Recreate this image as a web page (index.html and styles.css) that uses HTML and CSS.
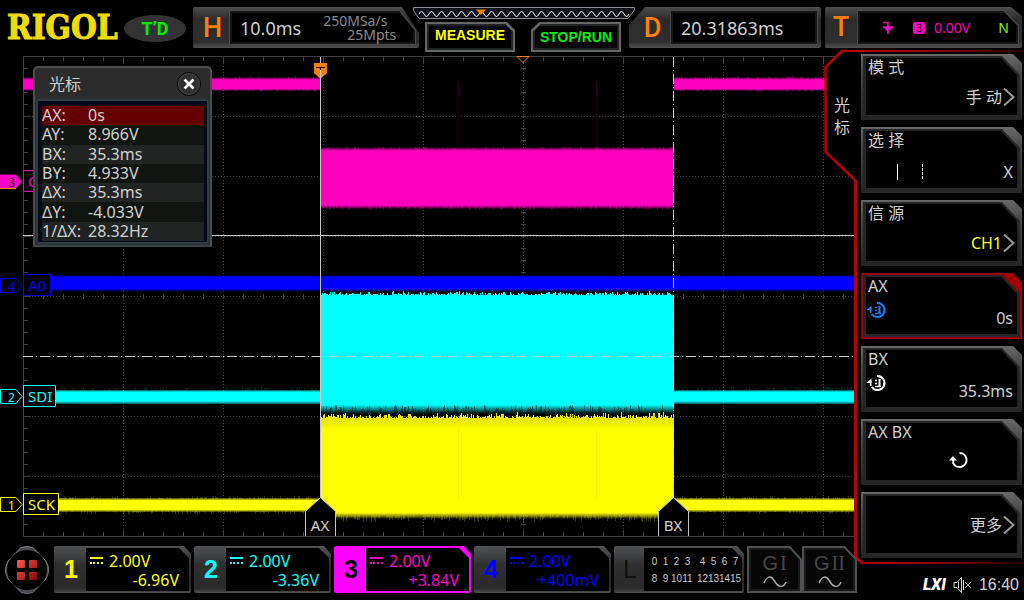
FILE: index.html
```html
<!DOCTYPE html>
<html lang="zh-CN">
<head>
<meta charset="utf-8">
<title>RIGOL</title>
<link rel="stylesheet" href="styles.css">
</head>
<body>
<div class="screen">
  <header class="topbar">
    <div class="logo">RIGOL</div>
    <div class="trig-state">T’D</div>
    <section class="box box-h">
      <span class="box-letter">H</span>
      <div class="box-well well-h"><div class="well-in">
        <span class="big">10.0ms</span>
        <span class="rate"><span>250MSa/s</span><span class="indent">25Mpts</span></span>
      </div></div>
    </section>
    <div class="center">
      <svg class="membar" viewBox="0 0 222 13">
        <path d="M.5.500H221.500V3L215 11.500H6L.5 3.500Z" fill="#101018" stroke="#8c8c94"/>
        <path id="memwave" fill="none" stroke="#fff"/>
        <path d="M63 2.500H73L68 8Z" fill="#ff8000"/>
      </svg>
      <div class="keys">
        <button class="key measure"><span>MEASURE</span></button>
        <button class="key run"><span>STOP/RUN</span></button>
      </div>
    </div>
    <section class="box box-d">
      <span class="box-letter">D</span>
      <div class="box-well"><div class="well-in"><span class="big">20.31863ms</span></div></div>
    </section>
    <section class="box box-t">
      <span class="box-letter">T</span>
      <div class="box-well well-h"><div class="well-in trig">
        <svg width="12" height="14" viewBox="0 0 12 14"><path d="M1 1.500H6V13M1 6H11" fill="none" stroke="#ff00c8" stroke-width="1.500"/><path d="M1 6H11L6 11Z" fill="#ff00c8"/></svg>
        <span class="src">3</span><span class="level">0.00V</span><span class="mode">N</span>
      </div></div>
    </section>
  </header>

  <main class="scope">
    <svg class="plot" viewBox="0 52 854 490" preserveAspectRatio="xMinYMin meet">
      <defs>
        <linearGradient id="gm" x2="0" y2="1"><stop offset="0" stop-color="#ff00c0" stop-opacity="0"/><stop offset=".2" stop-color="#ff00c0"/><stop offset=".85" stop-color="#ff00c0"/><stop offset="1" stop-color="#ff00c0" stop-opacity="0"/></linearGradient>
        <linearGradient id="gmb" x2="0" y2="1"><stop offset="0" stop-color="#ff00c0" stop-opacity="0"/><stop offset=".06" stop-color="#ff00c0"/><stop offset=".94" stop-color="#ff00c0"/><stop offset="1" stop-color="#ff00c0" stop-opacity="0"/></linearGradient>
        <linearGradient id="gb" x2="0" y2="1"><stop offset="0" stop-color="#00f" stop-opacity="0"/><stop offset=".12" stop-color="#00f"/><stop offset=".8" stop-color="#00f"/><stop offset="1" stop-color="#00f" stop-opacity="0"/></linearGradient>
        <linearGradient id="gc" x2="0" y2="1"><stop offset="0" stop-color="#0ff" stop-opacity=".3"/><stop offset=".15" stop-color="#0ff"/><stop offset=".8" stop-color="#0ff"/><stop offset="1" stop-color="#0ff" stop-opacity=".3"/></linearGradient>
        <linearGradient id="gy" x2="0" y2="1"><stop offset="0" stop-color="#ff0" stop-opacity=".2"/><stop offset=".17" stop-color="#ff0"/><stop offset=".83" stop-color="#ff0"/><stop offset="1" stop-color="#ff0" stop-opacity=".2"/></linearGradient>
        <linearGradient id="gcf" x2="0" y2="1"><stop offset="0" stop-color="#0ff"/><stop offset="1" stop-color="#0ff" stop-opacity="0"/></linearGradient>
        <linearGradient id="gyf" x2="0" y2="1"><stop offset="0" stop-color="#ff0"/><stop offset="1" stop-color="#ff0" stop-opacity="0"/></linearGradient>
        <linearGradient id="gyt" gradientUnits="userSpaceOnUse" x1="0" x2="0" y1="414" y2="430"><stop offset="0" stop-color="#e2e200"/><stop offset=".6" stop-color="#eeee00"/><stop offset="1" stop-color="#ff0"/></linearGradient>
      </defs>
      <g fill="none" stroke="#404040">
        <path id="grid" stroke-dasharray="1 2"/>
        <path id="ticks"/>
        <path d="M23.500 536.500V56.500H854M23.500 536.500H854"/>
      </g>
      <path d="M458.500 78V149M596.500 78V149" stroke="#18000f"/>
      <path d="M458.500 84V96M596.500 84V96" stroke="#38002a"/>
      <g>
        <rect x="23" y="77" width="297" height="14" fill="url(#gm)"/>
        <rect x="674" y="77" width="180" height="14" fill="url(#gm)"/>
        <rect x="320" y="147" width="354" height="62" fill="url(#gmb)"/>
        <path id="noise-m" stroke="#ff00c0" stroke-opacity=".3"/>
        <rect x="50" y="275" width="804" height="17" fill="url(#gb)"/>
        <rect x="55" y="390" width="265" height="14" fill="url(#gc)"/>
        <rect x="674" y="390" width="180" height="14" fill="url(#gc)"/>
        <path id="noise-c" stroke="#0ff" stroke-opacity=".12"/>
        <path id="burst-c" fill="#0ff"/>
        <rect x="320" y="405" width="354" height="9" fill="url(#gcf)"/>
        <path id="gap" stroke="#001414" stroke-opacity=".5"/>
        <rect x="59" y="498" width="261" height="14" fill="url(#gy)"/>
        <rect x="674" y="498" width="180" height="14" fill="url(#gy)"/>
        <path id="burst-y" fill="url(#gyt)"/>
        <rect x="320" y="513" width="354" height="6" fill="url(#gyf)"/>
        <path id="noise-y" stroke="#ff0" stroke-opacity=".2"/>
        <path d="M458.500 420V500M596.500 420V500" stroke="#f4f400"/>
      </g>
      <g stroke="#c8c8c8" fill="none">
        <path d="M23 235.500H854M320.500 57V498"/>
        <path d="M23 356.500H854M673.500 57V498" stroke-dasharray="10 3 1 3"/>
      </g>
      <g fill="#000" stroke="#c8c8c8">
        <path d="M305.500 536V511.500L320.500 497.500L335.500 511.500V536"/>
        <path d="M658.500 536V511.500L673.500 497.500L688.500 511.500V536"/>
      </g>
      <g class="cursor-name"><text x="320" y="531">AX</text><text x="673" y="531">BX</text></g>
      <path d="M517 56.500H529L523 62.500Z" fill="#000" stroke="#ff8000"/>
      <path d="M314 63H327V73L320.500 79L314 73Z" fill="#ff8000"/>
      <path d="M316 67.500H325M320.500 67V75" stroke="#000" fill="none"/>
      <path d="M320.500 70V79" stroke="#c8c8c8"/>
      <g class="tag" fill="#000">
        <path d="M0 174.500H16L22 181.500L16 188.500H0Z" fill="#ff00c8"/>
        <path d="M0 188.500H16" stroke="#ff8000"/>
        <path d="M23.500 170.500H55.500V191.500H23.500Z" stroke="#ff00c8"/>
        <path d="M.5 278.500H16L22 285.500L16 292.500H.5ZM23.500 274.500H50.500V295.500H23.500Z" stroke="#00f"/>
        <path d="M.5 389.500H16L22 396.500L16 403.500H.5ZM23.500 385.500H55.500V406.500H23.500Z" stroke="#0ff"/>
        <path d="M.5 497.500H16L22 504.500L16 511.500H.5ZM23.500 493.500H58.500V514.500H23.500Z" stroke="#ff0"/>
      </g>
      <g class="tag-num"><text x="8" y="187" fill="#000">3</text><text x="8" y="291" fill="#00f">4</text><text x="8" y="402" fill="#0ff">2</text><text x="8" y="510" fill="#ff0">1</text></g>
      <g class="tag-name"><text x="28" y="187" fill="#ff00c8">C</text><text x="28" y="291" fill="#00f">A0</text><text x="28" y="402" fill="#0ff">SDI</text><text x="28" y="510" fill="#ff0">SCK</text></g>
    </svg>

    <section class="dialog">
      <div class="dialog-head"><h2>光标</h2>
        <button class="close" aria-label="关闭"><svg width="12" height="12" viewBox="0 0 12 12"><path d="M1.500 1.500L10.500 10.500M10.500 1.500L1.500 10.500" stroke="#fff" stroke-width="2.600"/></svg></button>
      </div>
      <div class="dialog-body">
        <table class="readout">
          <tr class="active"><th>AX:</th><td>0s</td></tr>
          <tr><th>AY:</th><td>8.966V</td></tr>
          <tr><th>BX:</th><td>35.3ms</td></tr>
          <tr><th>BY:</th><td>4.933V</td></tr>
          <tr><th>ΔX:</th><td>35.3ms</td></tr>
          <tr><th>ΔY:</th><td>-4.033V</td></tr>
          <tr><th>1/ΔX:</th><td>28.32Hz</td></tr>
        </table>
      </div>
    </section>
  </main>

  <aside class="side">
    <nav class="menu">
      <svg class="outline" viewBox="824 50 200 516">
        <defs>
          <linearGradient id="fade" gradientUnits="userSpaceOnUse" x1="850" x2="1022" y1="0" y2="0"><stop offset="0" stop-color="#b80000"/><stop offset=".4" stop-color="#a00000"/><stop offset="1" stop-color="#200"/></linearGradient>
        </defs>
        <path d="M841 51L825 67V152L856 181V557L862 563H870V51Z" fill="#000"/>
        <path d="M841 51H1022M861 563H1022" stroke="url(#fade)" stroke-width="2"/>
        <path d="M842 51L825.500 67V152L855 180" fill="none" stroke="#b80000" stroke-width="2.500"/>
        <path d="M855.500 180V557L862 563" fill="none" stroke="#b80000" stroke-width="3"/>
      </svg>
      <div class="tab">光标</div>
      <button class="item"><span class="name">模 式</span><span class="value pick">手 动<svg class="chev" width="12" height="20" viewBox="0 0 12 20"><path d="M1 1.500L10.500 10L1 18.500" fill="none" stroke="#999" stroke-width="2"/></svg></span></button>
      <button class="item"><span class="name">选 择</span><span class="value split"><svg width="28" height="18" viewBox="0 0 28 18"><path d="M1.500 1V17" stroke="#fff"/><path d="M26.500 1V17" stroke="#fff" stroke-dasharray="3 1"/></svg><span>X</span></span></button>
      <button class="item"><span class="name">信 源</span><span class="value pick ch1">CH1<svg class="chev" width="12" height="20" viewBox="0 0 12 20"><path d="M1 1.500L10.500 10L1 18.500" fill="none" stroke="#999" stroke-width="2"/></svg></span></button>
      <button class="item selected"><span class="name">AX</span><svg class="knob blue" width="20" height="18" viewBox="0 0 20 18"><g fill="none" stroke="currentColor"><path d="M10 2A7 7 0 1 1 4.800 13" stroke-width="2"/><path d="M4 12A7 7 0 0 1 4 7" stroke-width="1.500"/><path d="M8 6.500H10M8 9.500H10M8 12.500H14" stroke-width="1.500"/><path d="M12.500 5V12" stroke-width="2"/></g><path d="M-.5 9L4.500 4.500V9Z" fill="currentColor"/></svg><span class="value">0s</span></button>
      <button class="item"><span class="name">BX</span><svg class="knob" width="20" height="18" viewBox="0 0 20 18"><g fill="none" stroke="currentColor"><path d="M10 2A7 7 0 1 1 4.800 13" stroke-width="2"/><path d="M4 12A7 7 0 0 1 4 7" stroke-width="1.500"/><path d="M8 6.500H10M8 9.500H10M8 12.500H14" stroke-width="1.500"/><path d="M12.500 5V12" stroke-width="2"/></g><path d="M-.5 9L4.500 4.500V9Z" fill="currentColor"/></svg><span class="value">35.3ms</span></button>
      <button class="item"><span class="name">AX BX</span><span class="value turn"><svg width="20" height="18" viewBox="0 0 20 18"><path d="M10.500 2A7 7 0 1 1 4.200 12V7" fill="none" stroke="#fff" stroke-width="2"/><path d="M0 9.500L4 5L8 9.500Z" fill="#fff"/></svg></span></button>
      <button class="item more"><span class="value">更多<svg class="chev" width="12" height="20" viewBox="0 0 12 20"><path d="M1 1.500L10.500 10L1 18.500" fill="none" stroke="#999" stroke-width="2"/></svg></span></button>
    </nav>
    <div class="status">
      <span class="lxi">LXI</span>
      <svg width="19" height="18" viewBox="0 0 19 18"><path d="M1 6.500H4L8.500 1.500V16.500L4 11.500H1Z" fill="none" stroke="#ddd"/><path d="M5.500 6V12M10.500 4V14" stroke="#ddd"/><path d="M12 6L18 12M18 6L12 12" stroke="#aaa"/></svg>
      <time>16:40</time>
    </div>
  </aside>

  <footer class="bottom">
    <button class="home" aria-label="菜单"><svg viewBox="0 0 46 48">
      <defs><linearGradient id="rim" x2="0" y2="1"><stop offset="0" stop-color="#888"/><stop offset=".5" stop-color="#777"/><stop offset="1" stop-color="#667"/></linearGradient><linearGradient id="red" gradientUnits="userSpaceOnUse" x1="13" y1="14" x2="33" y2="34"><stop offset="0" stop-color="#ff5858"/><stop offset="1" stop-color="#900000"/></linearGradient></defs>
      <path d="M17 1.500Q23-.5 29 1.500L42 15Q47 24 42 33L29 46.500Q23 48.500 17 46.500L4 33Q-1 24 4 15Z" fill="#4a4a4e" stroke="url(#rim)"/>
      <circle cx="23" cy="24" r="20" fill="#000"/>
      <g fill="url(#red)"><rect x="13" y="14" width="8" height="8" rx="1"/><rect x="25" y="14" width="8" height="8" rx="1"/><rect x="13" y="26" width="8" height="8" rx="1"/><rect x="25" y="26" width="8" height="8" rx="1"/></g>
    </svg></button>
    <button class="chan c1"><span class="num">1</span><span class="well"><span class="scale"><i class="dc"></i>2.00V</span><span class="off">-6.96V</span></span></button>
    <button class="chan c2"><span class="num">2</span><span class="well"><span class="scale"><i class="dc"></i>2.00V</span><span class="off">-3.36V</span></span></button>
    <button class="chan c3"><span class="num">3</span><span class="well"><span class="scale"><i class="dc"></i>2.00V</span><span class="off">+3.84V</span></span></button>
    <button class="chan c4"><span class="num">4</span><span class="well"><span class="scale"><i class="dc"></i>2.00V</span><span class="off">+400mV</span></span></button>
    <button class="chan logic"><span class="num">L</span><span class="well digits">
      <span>0</span><span>1</span><span>2</span><span>3</span><i></i><span>4</span><span>5</span><span>6</span><span>7</span>
      <span>8</span><span>9</span><span>10</span><span>11</span><i></i><span>12</span><span>13</span><span>14</span><span>15</span>
    </span></button>
    <button class="gen"><span class="gen-name">G<b>I</b></span><svg width="24" height="14" viewBox="0 0 24 14"><path d="M1 8C4 1 8 0 11.500 6S20 14 23 7" fill="none" stroke="#aaa" stroke-width="1.500"/></svg></button>
    <button class="gen"><span class="gen-name">G<b>II</b></span><svg width="24" height="14" viewBox="0 0 24 14"><path d="M1 8C4 1 8 0 11.500 6S20 14 23 7" fill="none" stroke="#aaa" stroke-width="1.500"/></svg></button>
  </footer>
</div>
<script src="traces.js"></script>
</body>
</html>
```
FILE: styles.css
```css
* { box-sizing: border-box; }
body {
  margin: 0;
  background: #000;
  color: #d0d0d0;
  font: 16px/20px "Noto Sans", "Noto Sans CJK SC", sans-serif;
}
button { font: inherit; color: inherit; border: 0; margin: 0; padding: 0; background: none; text-align: left; }
svg { display: block; }

.screen {
  display: grid;
  grid-template-columns: minmax(0, 1fr) 170px;
  grid-template-rows: 52px minmax(0, 1fr) 58px;
  min-height: 100vh;
}

/* top bar */
.topbar { grid-column: 1 / 3; display: flex; align-items: flex-start; padding: 7px 2px 0 7px; }
.logo {
  flex: 0 0 117px;
  margin-top: 1px;
  font: bold 33px/40px "DejaVu Serif Condensed", "Liberation Serif", serif;
  color: #f0dc00;
  -webkit-text-stroke: 1px #f0dc00;
}
.trig-state {
  flex: 0 0 62px;
  height: 27px;
  margin: 8px 7px 0 0;
  border-radius: 50%;
  background: #333;
  color: #00f000;
  text-align: center;
  font: bold 18px/28px "Roboto", sans-serif;
}
.box {
  display: flex;
  height: 41px;
  padding: 3px;
  border-radius: 2px;
  background: linear-gradient(#4c4c4c, #2c2c2c 30%, #2e2e2e 85%, #505050);
}
.box-h { flex: 227 0 0; clip-path: polygon(0 0, calc(100% - 17px) 0, 100% 26px, 100% 100%, 0 100%); }
.box-d { flex: 192 0 0; margin-left: -6px; clip-path: polygon(16px 0, 100% 0, 100% 100%, 0 100%, 0 18px); }
.box-t { flex: 197 0 0; margin-left: 4px; clip-path: polygon(0 0, calc(100% - 11px) 0, 100% 9px, 100% 100%, 0 100%); }
.box-letter { flex: 0 0 33px; text-align: center; color: #ff8000; font: 500 27px/36px "Roboto", sans-serif; }
.box-t .box-letter { flex-basis: 29px; padding-right: 3px; line-height: 34px; }
.box-d .box-letter { flex-basis: 38px; padding-left: 3px; }
.box-well { flex: 1; padding: 1px; background: #4a4a4a; }
.well-in { height: 100%; display: flex; align-items: center; padding: 0 8px; background: #000; border: 2px solid #161616; }
.well-h, .well-h .well-in { clip-path: polygon(0 0, calc(100% - 16px) 0, 100% 20px, 100% 100%, 0 100%); }
.box-t .well-h, .box-t .well-in { clip-path: polygon(0 0, calc(100% - 15px) 0, 100% 15px, 100% 100%, 0 100%); }
.big { font-size: 18px; line-height: 24px; }
.rate { flex: 1; display: flex; flex-direction: column; padding-left: 22px; color: #8c8c8c; font-size: 14px; line-height: 14px; }
.rate .indent { padding-left: 24px; }
.trig { font-size: 14px; color: #ff00c8; padding: 0 7px 0 22px; }
.src { margin: 0 9px 0 19px; width: 12px; height: 12px; border-radius: 2px; background: #ff00c8; color: #000; font: 11px/12px "Liberation Sans", sans-serif; text-align: center; }
.mode { margin-left: auto; color: #8cf000; }

.center { flex: 0 0 222px; margin-left: -6px; }
.membar { width: 100%; height: 13px; }
.keys { display: flex; justify-content: space-between; padding: 2px 14px 0 12px; }
.key {
  position: relative;
  width: 90px;
  height: 30px;
  background: #666;
  color: #ff0;
  text-align: center;
  font: bold 14px/26px "Liberation Sans", sans-serif;
  isolation: isolate;
}
.key span { display: block; height: 30px; }
.key::before { content: ""; position: absolute; inset: 2px; z-index: -1; background: #000; border: 2px solid #202422; }
.measure, .measure::before { clip-path: polygon(0 0, calc(100% - 8px) 0, 100% 8px, 100% 100%, 0 100%); }
.run, .run::before { clip-path: polygon(8px 0, 100% 0, 100% 100%, 0 100%, 0 8px); }
.run { color: #00f000; line-height: 30px; }

/* waveform area */
.scope { position: relative; min-width: 0; }
.plot { width: 100%; height: 100%; }
.plot text { font-family: "Noto Sans", sans-serif; stroke: none; }
.cursor-name { font-size: 15px; fill: #d0d0d0; text-anchor: middle; }
.tag-num { font-size: 12px; }
.tag-name { font-size: 15px; }

.dialog {
  position: absolute;
  left: 33px;
  top: 14px;
  width: 179px;
  border: 2px solid #4c4e4e;
  border-bottom-color: #384448;
  border-radius: 5px 5px 1px 1px;
  background: #2b2c2b;
}
.dialog-head { display: flex; align-items: center; justify-content: space-between; height: 31px; padding: 0 9px 0 14px; }
.dialog-head h2 { margin: 0; font-size: 16px; font-weight: 400; line-height: 32px; }
.close { width: 24px; height: 24px; border: 1px solid #000; border-radius: 50%; background: #303030; outline: 1px solid #444; outline-offset: -2px; display: flex; align-items: center; justify-content: center; }
.dialog-body { margin: 0 1px 1px; padding: 5px 5px 1px; border: 2px solid #303c42; border-radius: 3px; background: #000a18; }
.readout { width: 162px; height: 135px; margin-left: -1px; border-collapse: collapse; line-height: 19px; }
.readout th { width: 46px; font-weight: 400; text-align: left; padding: 0; white-space: nowrap; }
.readout td { padding: 0; }
.readout tr { background: #101512; }
.readout tr:nth-child(odd) { background: #222423; }
.readout tr.active { background: #640000; }

/* side menu */
.side { grid-column: 2; grid-row: 2 / 4; display: flex; flex-direction: column; position: relative; }
.menu { position: relative; display: flex; flex-direction: column; gap: 7px; padding: 2px 2px 0 7px; }
.outline { position: absolute; left: -30px; top: -2px; width: 200px; height: 516px; }
.tab { position: absolute; left: -20px; top: 42px; width: 16px; line-height: 22px; }
.item {
  position: relative;
  isolation: isolate;
  height: 66px;
  display: flex;
  flex-direction: column;
  padding: 3px 9px 8px 7px;
  background: linear-gradient(#686868, #484848 30%, #242424);
  clip-path: polygon(0 0, calc(100% - 9px) 0, 100% 9px, 100% 100%, 0 100%);
}
.item::before, .item::after { content: ""; position: absolute; z-index: -1; }
.item::before { inset: 2px; background: #262626; clip-path: polygon(0 0, calc(100% - 18px) 0, 100% 19px, 100% 100%, 0 100%); }
.item::after { inset: 4px 5px 5px; background: #000; clip-path: polygon(0 0, calc(100% - 16px) 0, 100% 17px, 100% 100%, 0 100%); }
.item.selected { background: #a00000; }
.name { line-height: 20px; }
.value { margin-top: auto; line-height: 26px; display: flex; align-items: center; justify-content: flex-end; }
.pick { padding-bottom: 2px; }
.more { padding-bottom: 3px; }
.more .value { margin-bottom: auto; }
.chev { margin-right: -2px; }
.pick .chev, .more .chev { margin-left: 1px; }
.split { justify-content: space-between; padding-left: 28px; }
.ch1 { color: #ff0; }
.knob { margin: 5px 0 -23px -1px; color: #fff; overflow: visible; }
.knob.blue { color: #1080ff; }
.turn { padding: 0 44px 8px 0; }

.status { flex: 1; display: flex; align-items: center; justify-content: flex-end; gap: 7px; padding: 11px 5px 0 0; }
.lxi { color: #fff; font: italic 900 16px/18px "Roboto", sans-serif; }
.status time { font: 16px/18px "Liberation Sans", sans-serif; }

/* channel bar */
.bottom { grid-column: 1; display: flex; gap: 3px; padding: 4px 0 7px 4px; margin-right: -3px; }
.home { flex: 0 0 47px; }
.home svg { width: 46px; height: 48px; }
.chan {
  flex: 1 1 137px;
  min-width: 0;
  display: flex;
  padding: 2px;
  border-radius: 2px;
  background: linear-gradient(#505254, #303030 40%, #2a2a2a 90%, #505050);
  clip-path: polygon(0 0, calc(100% - 7px) 0, 100% 8px, 100% 100%, 0 100%);
}
.num { flex: 0 0 30px; text-align: center; font: bold 25px/43px "Liberation Sans", sans-serif; }
.well { flex: 1; display: flex; flex-direction: column; padding: 4px 10px 0 4px; line-height: 19px; background: #000; clip-path: polygon(0 0, calc(100% - 10px) 0, 100% 10px, 100% 100%, 0 100%); }
.scale { display: flex; gap: 6px; }
.off { text-align: right; }
.dc { width: 13px; height: 7px; margin-top: 5px; border-top: 2px solid currentColor; border-bottom: 2px dotted currentColor; }
.c1 { color: #ff0; }
.c2 { color: #0ff; }
.c3 { color: #ff00c8; background: #f0f; }
.c3 .num { color: #000; }
.c4 { color: #00f; }
.logic { flex-basis: 130px; }
.logic .num { flex-basis: 28px; color: #111; font-weight: 400; }
.digits {
  display: grid;
  grid-template-columns: repeat(4, 11px) 4px repeat(4, 11px);
  align-content: center;
  padding: 0 0 0 5px;
  color: #c8c8c8;
  font: 10px/17px "Liberation Sans", sans-serif;
  text-align: center;
}
.gen {
  position: relative;
  isolation: isolate;
  flex: 0 0 55px;
  display: flex;
  flex-direction: column;
  align-items: center;
  background: #505050;
  color: #484848;
  padding-top: 5px;
  clip-path: polygon(0 0, calc(100% - 12px) 0, 100% 13px, 100% 100%, 0 100%);
}
.gen-name { display: flex; gap: 2px; font: 20px/24px "Liberation Sans", sans-serif; }
.gen-name b { font: 20px/24px "Liberation Serif", serif; }
.gen + .gen { margin-left: -3px; }
.gen::before { content: ""; position: absolute; inset: 2px; z-index: -1; background: #060606; border: 2px solid #181a1a; clip-path: polygon(0 0, calc(100% - 11px) 0, 100% 12px, 100% 100%, 0 100%); }
```
FILE: traces.js
```js
let seed = 7;
const rand = () => (seed = (seed * 16807) % 2147483647) / 2147483647;
const draw = (id, d) => document.getElementById(id).setAttribute("d", d);

// graticule
let grid = "M23 296.5H854", ticks = "";
for (let x = 123.5; x < 854; x += 100) grid += `M${x} 57V536`;
for (let y = 116.5; y < 536; y += 60) grid += `M23 ${y}H854`;
for (let x = 43.5; x < 854; x += 20) {
  const t = (x - 23.5) % 100 === 0 ? 6 : 4;
  ticks += `M${x} 57v${t}M${x} 536v-${t}M${x} 294v5`;
}
for (let y = 68.5; y < 536; y += 12) {
  const t = (y - 56.5) % 60 === 0 ? 7 : 4;
  ticks += `M24 ${y}h${t}M521 ${y}h5`;
}
draw("grid", grid);
draw("ticks", ticks);

// memory bar ripple
let wave = "M6 7";
for (let x = 6; x < 210; x += 10) wave += "q2.5 -5 5 0t5 0";
draw("memwave", wave);

// burst with a ragged top edge
const burst = (top, spread, bottom) => {
  let d = `M320 ${bottom}`;
  for (let x = 320; x < 674; x++) d += `V${top + Math.round((rand() * rand()) * -spread)}H${x + 1}`;
  return d + `V${bottom}Z`;
};
draw("burst-c", burst(295, 4, 405));
draw("burst-y", burst(418, 6, 513));

// fringe strokes along an edge
const fringe = (x0, x1, y, h, p) => {
  let d = "";
  for (let x = x0; x < x1; x++) if (rand() < p) d += `M${x + 0.5} ${y}v${Math.round(rand() * h)}`;
  return d;
};
draw("noise-m", fringe(213, 320, 79, -3, 0.5) + fringe(213, 320, 89, 3, 0.5) + fringe(674, 854, 79, -3, 0.5) + fringe(674, 854, 89, 3, 0.5) + fringe(320, 674, 150, -3, 0.6) + fringe(320, 674, 206, 4, 0.6));
draw("noise-c", fringe(56, 320, 390, -3, 0.4) + fringe(674, 854, 390, -3, 0.4));
draw("gap", fringe(320, 674, 414, -9, 0.6));
draw("noise-y", fringe(59, 320, 499, -3, 0.5) + fringe(59, 320, 511, 3, 0.5) + fringe(674, 854, 499, -3, 0.5) + fringe(674, 854, 511, 3, 0.5) + fringe(335, 658, 515, 7, 0.6));
```
